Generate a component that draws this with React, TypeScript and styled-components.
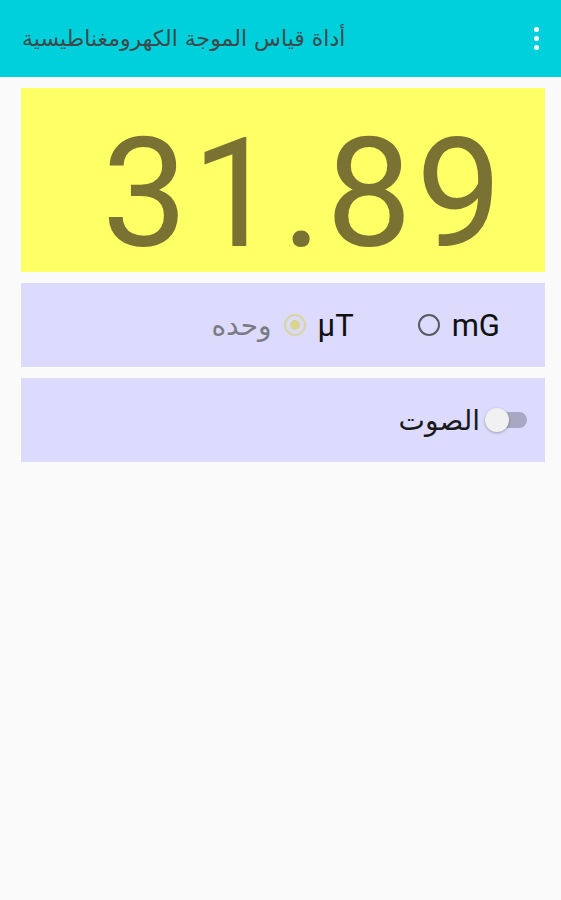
import React from "react";
import styled, { createGlobalStyle } from "styled-components";

const GlobalStyle = createGlobalStyle`
  html, body {
    margin: 0;
    padding: 0;
    background: #fafafa;
  }
  body {
    font-family: Roboto, "DejaVu Sans", sans-serif;
  }
`;

const Screen = styled.div`
  min-height: 900px;
  background: #fafafa;
`;

const Toolbar = styled.header`
  align-items: center;
  background: #00d0dc;
  box-sizing: border-box;
  direction: rtl;
  display: flex;
  height: 77px;
  justify-content: space-between;
  padding: 0 22px 0 22px;
`;

const Title = styled.h1`
  color: #3d4a4c;
  font-family: "DejaVu Sans", sans-serif;
  font-size: 22px;
  font-weight: normal;
  margin: 0;
  white-space: nowrap;
`;

const MenuDots = styled.div`
  display: flex;
  flex-direction: column;
  gap: 4px;
  order: -1;

  span {
    background: #ffffff;
    border-radius: 50%;
    display: block;
    height: 5px;
    width: 5px;
  }
`;

const Content = styled.main`
  display: flex;
  flex-direction: column;
  gap: 11px;
  padding: 11px 16px 0 21px;
`;

const Reading = styled.div`
  align-items: center;
  background: #ffff66;
  box-sizing: border-box;
  color: #7a7232;
  display: flex;
  font-family: Roboto, sans-serif;
  font-size: 153px;
  height: 184px;
  justify-content: flex-end;
  letter-spacing: 4px;
  line-height: 1;
  padding-right: 39px;
  padding-top: 26px;
`;

const Panel = styled.div<{ $right: number }>`
  align-items: center;
  background: #dcdbfd;
  box-sizing: border-box;
  direction: rtl;
  display: flex;
  height: 84px;
  padding-right: ${(p) => p.$right}px;
`;

const RadioItem = styled.label<{ $gap: number }>`
  align-items: center;
  color: #111;
  direction: ltr;
  display: flex;
  font-family: Roboto, sans-serif;
  font-size: 31px;
  gap: 12px;
  margin-left: ${(p) => p.$gap}px;
`;

const Radio = styled.span<{ $checked?: boolean }>`
  border: 2px solid ${(p) => (p.$checked ? "#d9d5a2" : "#5a5a62")};
  border-radius: 50%;
  box-sizing: border-box;
  display: inline-block;
  height: 22px;
  position: relative;
  width: 22px;

  &::after {
    background: #d9d48e;
    border-radius: 50%;
    content: "";
    display: ${(p) => (p.$checked ? "block" : "none")};
    height: 10px;
    left: 4px;
    position: absolute;
    top: 4px;
    width: 10px;
  }
`;

const UnitLabel = styled.span`
  color: #7a7a84;
  font-family: "DejaVu Sans", sans-serif;
  font-size: 28px;
`;

const Switch = styled.span`
  display: inline-block;
  height: 26px;
  position: relative;
  width: 42px;
`;

const SwitchTrack = styled.span`
  background: #a9a8c4;
  border-radius: 8px;
  height: 16px;
  position: absolute;
  right: 0;
  top: 5px;
  width: 37px;
`;

const SwitchThumb = styled.span`
  background: #f1f1f1;
  border-radius: 50%;
  box-shadow: 0 1px 3px rgba(0, 0, 0, 0.3);
  height: 24px;
  left: 0;
  position: absolute;
  top: 1px;
  width: 24px;
`;

const SoundLabel = styled.span`
  color: #1a1a1a;
  font-family: "DejaVu Sans", sans-serif;
  font-size: 28px;
  margin-right: 5px;
`;

export default function App() {
  return (
    <>
      <GlobalStyle />
      <Screen>
        <Toolbar>
          <Title>أداة قياس الموجة الكهرومغناطيسية</Title>
          <MenuDots>
            <span />
            <span />
            <span />
          </MenuDots>
        </Toolbar>
        <Content>
          <Reading>31.89</Reading>
          <Panel $right={45}>
            <RadioItem $gap={64}>
              <Radio />
              mG
            </RadioItem>
            <RadioItem $gap={12}>
              <Radio $checked />
              µT
            </RadioItem>
            <UnitLabel>وحده</UnitLabel>
          </Panel>
          <Panel $right={18}>
            <Switch>
              <SwitchTrack />
              <SwitchThumb />
            </Switch>
            <SoundLabel>الصوت</SoundLabel>
          </Panel>
        </Content>
      </Screen>
    </>
  );
}
